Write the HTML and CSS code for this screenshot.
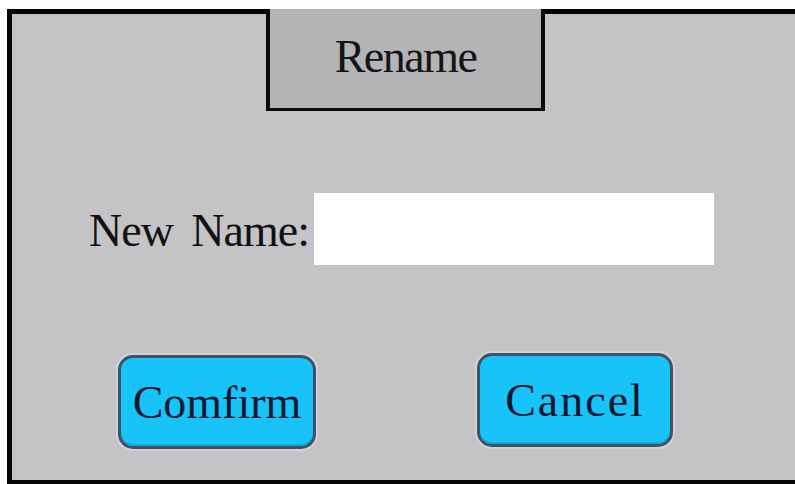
FILE: index.html
```html
<!DOCTYPE html>
<html>
<head>
<meta charset="utf-8">
<link rel="stylesheet" href="styles.css">
</head>
<body>
<div class="frame">
  <div class="head">
    <div class="line line-left"></div>
    <div class="tab">Rename</div>
    <div class="line line-right"></div>
  </div>
  <div class="form-row">
    <span class="label">New Name:</span>
    <div class="input"></div>
  </div>
  <div class="buttons">
    <div class="btn btn-confirm">Comfirm</div>
    <div class="btn btn-cancel">Cancel</div>
  </div>
</div>
</body>
</html>
```
FILE: styles.css
```css
html, body {
  margin: 0;
  padding: 0;
  background: #ffffff;
  overflow: hidden;
}
body {
  width: 795px;
  height: 484px;
  font-family: "Liberation Serif", "Times New Roman", serif;
}
.frame {
  margin: 9px 0 0 7px;
  height: 475px;
  box-sizing: border-box;
  border-left: 5px solid #050505;
  border-bottom: 4px solid #050505;
  background: #c4c3c6;
  display: flex;
  flex-direction: column;
}
.head {
  display: flex;
  height: 102px;
  flex: none;
}
.line {
  border-top: 5px solid #050505;
  height: 0;
}
.line-left {
  width: 254px;
  flex: none;
}
.line-right {
  flex: 1;
}
.tab {
  width: 279px;
  flex: none;
  box-sizing: border-box;
  border-left: 4px solid #0a0a0a;
  border-right: 4px solid #0a0a0a;
  border-bottom: 3px solid #0a0a0a;
  background: #b4b3b6;
  display: flex;
  align-items: center;
  justify-content: center;
  font-size: 46px;
  letter-spacing: -1.5px;
  color: #151515;
  padding-bottom: 4px;
}
.form-row {
  display: flex;
  align-items: center;
  margin-top: 82px;
  padding-left: 77px;
}
.label {
  font-size: 46px;
  color: #111111;
  width: 225px;
  flex: none;
  white-space: pre;
  letter-spacing: -1px;
  word-spacing: 8px;
  padding-top: 2px;
}
.input {
  width: 400px;
  height: 72px;
  background: #ffffff;
}
.buttons {
  display: flex;
  align-items: flex-start;
  margin-top: 88px;
  padding-left: 106px;
}
.btn {
  box-sizing: border-box;
  height: 94px;
  border: 3px solid #3e5366;
  border-radius: 15px;
  background: #17c3f7;
  box-shadow: 0 0 0 2px #d4d2d6, inset 0 -2px 0 #10a9dc;
  display: flex;
  align-items: center;
  justify-content: center;
  font-size: 46px;
  color: #0a1530;
}
.btn-confirm {
  width: 198px;
  margin-top: 2px;
}
.btn-cancel {
  width: 196px;
  margin-left: 161px;
  letter-spacing: 2px;
}
```
